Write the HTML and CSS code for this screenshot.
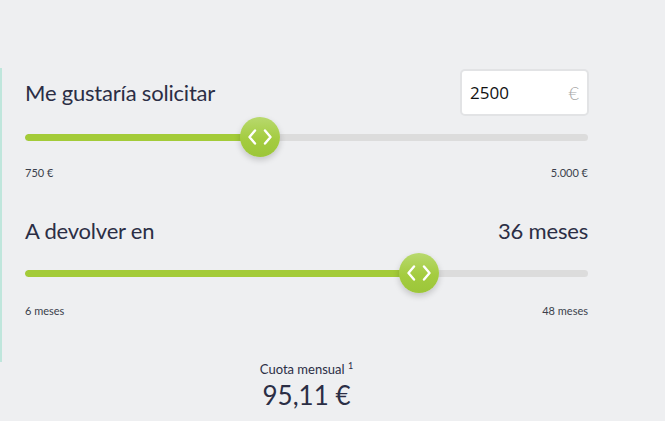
FILE: index.html
```html
<!DOCTYPE html>
<html lang="es">
<head>
<meta charset="utf-8">
<link rel="stylesheet" href="styles.css">
</head>
<body>
<div class="page">
  <div class="calc">
    <div class="block">
      <div class="row row-first">
        <div class="title">Me gustaría solicitar</div>
        <div class="amount">
          <span class="amount-value">2500</span>
          <span class="amount-cur">€</span>
        </div>
      </div>
      <div class="slider">
        <div class="track">
          <div class="fill" style="width: 235px"></div>
        </div>
        <div class="thumb" style="left: 215px">
          <svg width="24" height="16" viewBox="0 0 24 16"><path d="M7 1.5 L1.5 8 L7 14.5 M17 1.5 L22.5 8 L17 14.5" fill="none" stroke="#fff" stroke-width="2.4" stroke-linecap="round" stroke-linejoin="round"/></svg>
        </div>
      </div>
      <div class="limits limits-first"><span>750 €</span><span>5.000 €</span></div>
    </div>

    <div class="block">
      <div class="row row-second">
        <div class="title">A devolver en</div>
        <div class="title">36 meses</div>
      </div>
      <div class="slider">
        <div class="track">
          <div class="fill" style="width: 394px"></div>
        </div>
        <div class="thumb" style="left: 374px">
          <svg width="24" height="16" viewBox="0 0 24 16"><path d="M7 1.5 L1.5 8 L7 14.5 M17 1.5 L22.5 8 L17 14.5" fill="none" stroke="#fff" stroke-width="2.4" stroke-linecap="round" stroke-linejoin="round"/></svg>
        </div>
      </div>
      <div class="limits limits-second"><span>6 meses</span><span>48 meses</span></div>
    </div>
  </div>
  <div class="result">
    <div class="result-label">Cuota mensual <sup>1</sup></div>
    <div class="result-value">95,11 €</div>
  </div>
</div>
</body>
</html>
```

FILE: styles.css
```css
html, body {
  margin: 0;
  padding: 0;
  background: #eeeff1;
  font-family: "Source Sans Pro", Lato, "Open Sans", sans-serif;
  color: #2b2e45;
  overflow: hidden;
}
.page {
  width: 665px;
  height: 421px;
  padding-top: 68px;
  box-sizing: border-box;
}
.calc {
  border-left: 2px solid #bfe6dc;
  padding-left: 23px;
  width: 563px;
  height: 294px;
  box-sizing: content-box;
}
.row {
  display: flex;
  justify-content: space-between;
  align-items: center;
}
.row-first {
  height: 47px;
  padding-top: 1px;
}
.row-second {
  height: 30px;
  margin-top: 35px;
}
.title {
  font-size: 22px;
  letter-spacing: -0.2px;
  color: #2b2e45;
  font-weight: 400;
}
.amount {
  width: 129px;
  height: 47px;
  box-sizing: border-box;
  background: #fff;
  border: 2px solid #e2e3e5;
  border-radius: 5px;
  display: flex;
  align-items: center;
  justify-content: space-between;
  padding: 0 8px 0 8px;
  margin-right: -1px;
}
.amount-value {
  font-family: "Open Sans", sans-serif;
  font-size: 17px;
  color: #111;
}
.amount-cur {
  font-size: 18px;
  color: #a8a8a8;
  font-weight: 300;
}
.slider {
  position: relative;
  height: 40px;
  margin-top: 1px;
}
.row-second + .slider {
  margin-top: 8px;
}
.track {
  position: absolute;
  left: 0;
  right: 0;
  top: 17px;
  height: 7px;
  border-radius: 4px;
  background: #dcdcdc;
  overflow: hidden;
}
.fill {
  height: 100%;
  background: #a3cb38;
  border-radius: 4px;
}
.thumb {
  position: absolute;
  top: 0;
  width: 40px;
  height: 40px;
  border-radius: 50%;
  background: linear-gradient(180deg, #b8d96e 0%, #a4cc40 55%, #9cc639 100%);
  box-shadow: 0 3px 6px rgba(0,0,0,0.18);
  display: flex;
  align-items: center;
  justify-content: center;
}
.limits {
  display: flex;
  justify-content: space-between;
  font-size: 11px;
  color: #3b3f4c;
  line-height: 14px;
}
.limits-first { margin-top: 9px; }
.limits-second { margin-top: 11px; }
.result {
  width: 563px;
  margin-left: 25px;
  text-align: center;
  margin-top: -1px;
}
.result-label {
  font-size: 13px;
  line-height: 16px;
  color: #2b2e45;
}
.result-label sup {
  font-size: 9px;
  vertical-align: 0;
  position: relative;
  top: -5px;
}
.result-value {
  font-size: 26px;
  line-height: 32px;
  color: #2b2e45;
  margin-top: 0;
}
```
